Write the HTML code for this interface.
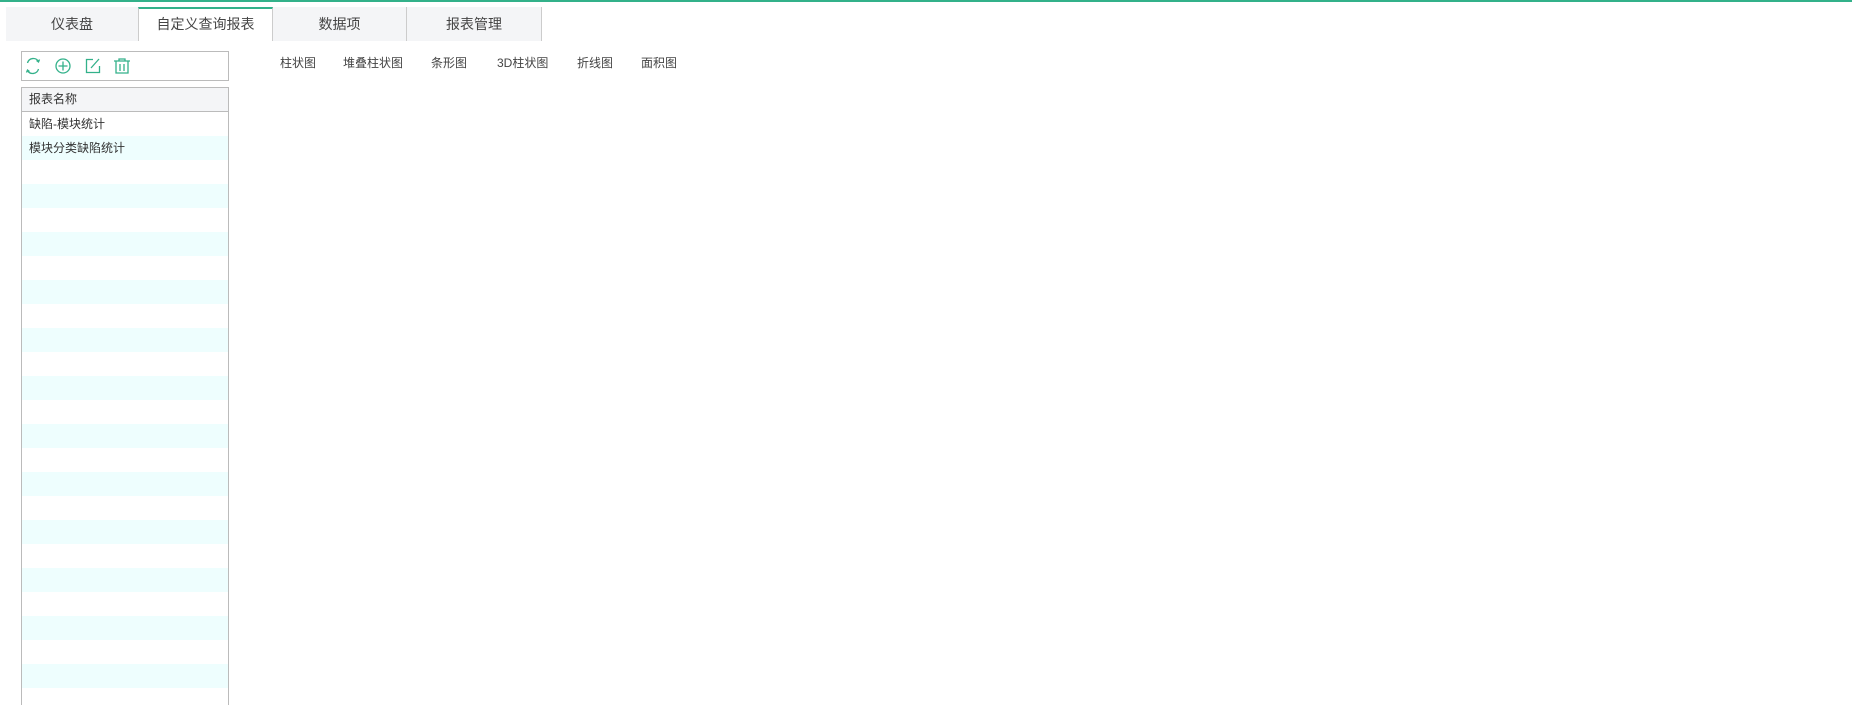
<!DOCTYPE html>
<html><head><meta charset="utf-8"><style>
*{margin:0;padding:0;box-sizing:border-box}
html,body{width:1852px;height:705px;overflow:hidden}
body{background:#fff;font-family:"Liberation Sans","Noto Sans CJK SC",sans-serif;position:relative;color:#333}
.top{position:absolute;left:0;top:0;width:1852px;height:2px;background:#33b18a}
.tab{position:absolute;top:7px;height:34px;background:#f4f5f7;border-right:1px solid #ccc;font-size:14px;color:#444;text-align:center;line-height:34px}
.tab.act{background:#fff;border-top:2px solid #33b18a;line-height:31px;border-left:1px solid #ccc}
.tb{position:absolute;left:21px;top:51px;width:208px;height:30px;border:1px solid #bbb}
.list{position:absolute;left:21px;top:87px;width:208px;height:618px;border:1px solid #bbb;border-bottom:none;overflow:hidden}
.hd{height:24px;background:#f4f5f7;border-bottom:1px solid #bbb;font-size:12px;line-height:23px;padding-left:7px}
.row{height:24px;font-size:12px;line-height:24px;padding-left:7px}
.ch{position:absolute;top:54px;font-size:12px;color:#444}
svg{position:absolute}
</style></head><body>
<div class="top"></div>
<div class="tab" style="left:6px;width:133px">仪表盘</div>
<div class="tab act" style="left:138px;width:135px">自定义查询报表</div>
<div class="tab" style="left:273px;width:134px">数据项</div>
<div class="tab" style="left:407px;width:135px">报表管理</div>
<div class="tb"></div>
<svg width="140" height="30" style="left:20px;top:51px" fill="none" stroke="#33b18a" stroke-width="1.3">
<path d="M7.5 12a6 6 0 0 1 11-1.5M18.5 18a6 6 0 0 1-11 1.5"/><path d="M16.5 9.5l2 1.5 1-2.5M9.5 20.5l-2-1.5-1 2.5"/>
<circle cx="43" cy="15" r="7"/><path d="M43 10.5v9M38.5 15h9"/>
<path d="M73 8.5h-6.5v13h13V15"/><path d="M71 17l8-9"/>
<path d="M94 10h16M99 10V8h6v2M96 10v12h12V10M100 13v7M104 13v7"/>
</svg>
<div class="list">
<div class="hd">报表名称</div>
<div class="row" style="background:#fff">缺陷-模块统计</div>
<div class="row" style="background:#eefefe">模块分类缺陷统计</div>
<div style="height:546px;background:repeating-linear-gradient(#fff 0 24px,#eefefe 24px 48px)"></div>
</div>
<div class="ch" style="left:280px">柱状图</div>
<div class="ch" style="left:343px">堆叠柱状图</div>
<div class="ch" style="left:431px">条形图</div>
<div class="ch" style="left:497px">3D柱状图</div>
<div class="ch" style="left:577px">折线图</div>
<div class="ch" style="left:641px">面积图</div>
</body></html>
